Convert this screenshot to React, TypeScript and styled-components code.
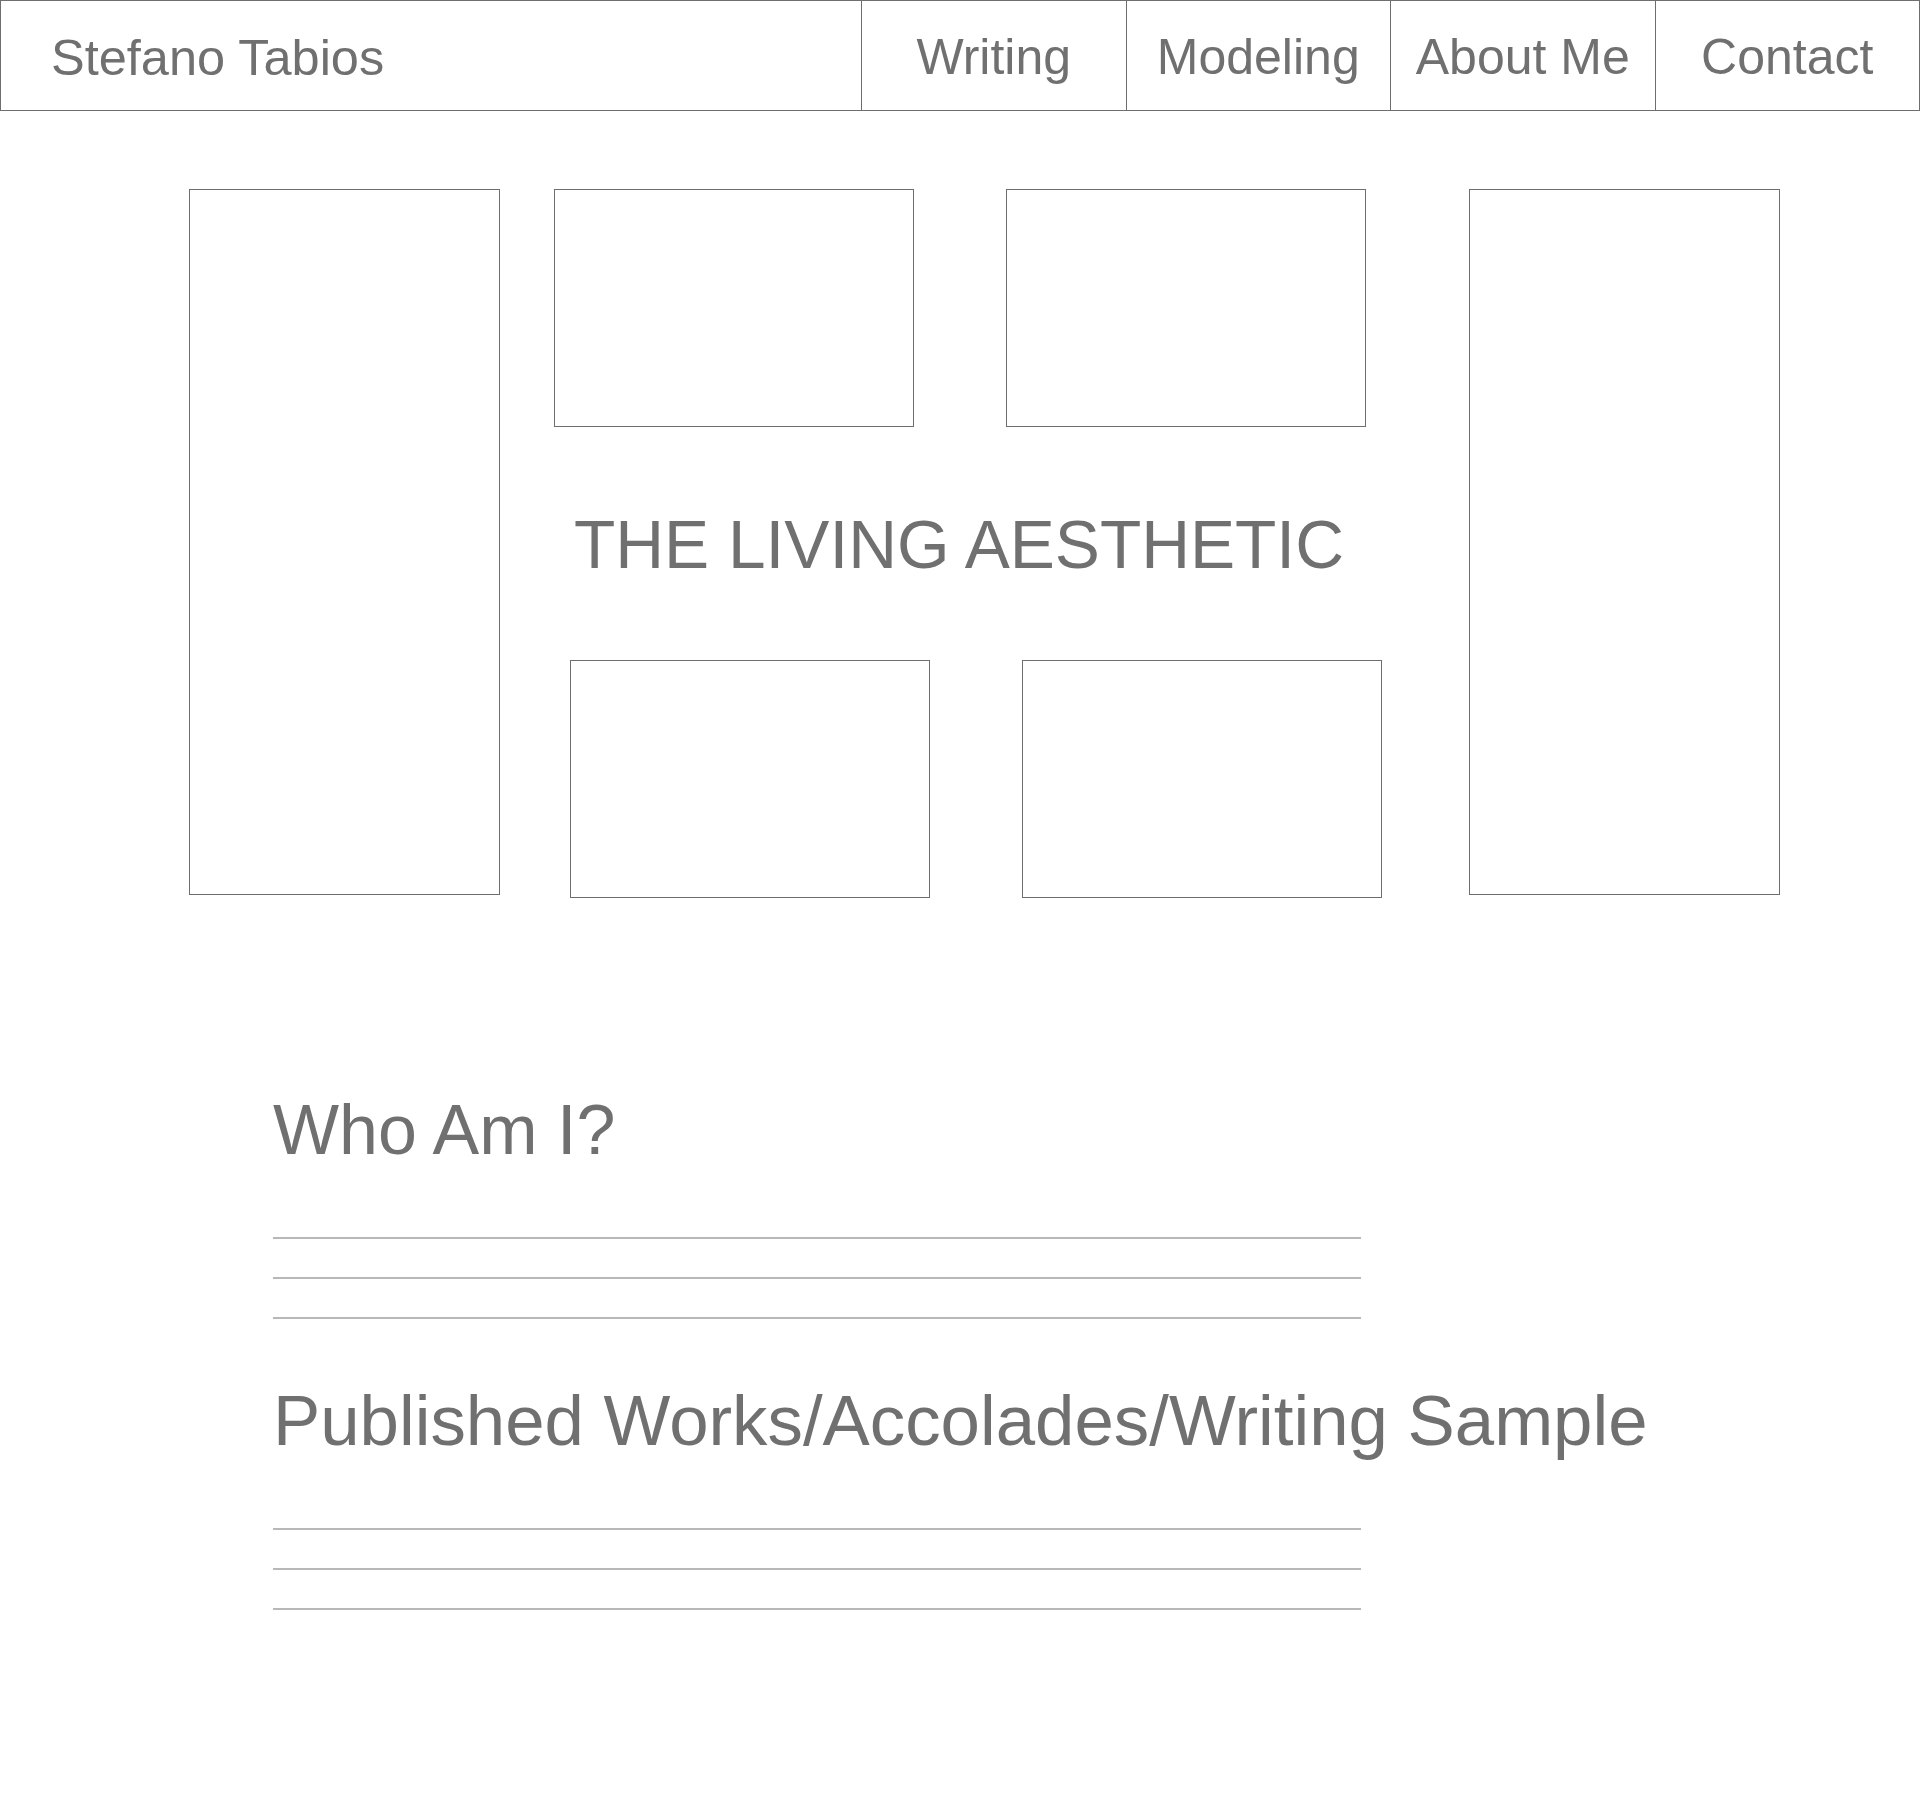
import { createGlobalStyle } from 'styled-components';
import styled from 'styled-components';

const GlobalStyle = createGlobalStyle`
  html, body {
    margin: 0;
    padding: 0;
    background: #ffffff;
  }

  body {
    font-family: "Liberation Sans", Arial, Helvetica, sans-serif;
    color: #707070;
  }

  * {
    box-sizing: border-box;
  }
`;

const Page = styled.div`
  width: 1920px;
  min-height: 1795px;
  background: #ffffff;
`;

const Header = styled.header`
  display: flex;
  height: 111px;
  border: 1px solid #6e6e6e;
`;

const Brand = styled.div`
  flex: 1;
  display: flex;
  align-items: center;
  padding: 5px 0 0 50px;
  font-size: 50.5px;
  line-height: 1;
  color: #707070;
  white-space: nowrap;
`;

const NavItem = styled.a`
  width: 264.5px;
  flex: none;
  display: flex;
  align-items: center;
  justify-content: center;
  padding-top: 2px;
  border-left: 1px solid #6e6e6e;
  font-size: 50px;
  line-height: 1;
  color: #707070;
  text-decoration: none;
  white-space: nowrap;
`;

const Hero = styled.section`
  display: flex;
  align-items: flex-start;
  padding: 78px 0 0 189px;
`;

const TallFrame = styled.div<{ $gap: number }>`
  width: 311px;
  height: 706px;
  margin-left: ${({ $gap }) => $gap}px;
  border: 1px solid #6e6e6e;
  flex: none;
`;

const Middle = styled.div`
  width: 828px;
  margin-left: 54px;
  display: flex;
  flex-direction: column;
  flex: none;
`;

const FrameRow = styled.div<{ $offset: number }>`
  display: flex;
  gap: 92px;
  padding-left: ${({ $offset }) => $offset}px;
`;

const SmallFrame = styled.div`
  width: 360px;
  height: 238px;
  border: 1px solid #6e6e6e;
  flex: none;
`;

const Title = styled.h1`
  margin: 84px 0 82px 20px;
  font-size: 67.6px;
  line-height: 67px;
  font-weight: 400;
  color: #707070;
  white-space: nowrap;
`;

const Section = styled.section<{ $top: number }>`
  padding-left: 273px;
  margin-top: ${({ $top }) => $top}px;
`;

const Heading = styled.h2<{ $size: number }>`
  margin: 0;
  font-size: ${({ $size }) => $size}px;
  line-height: 70px;
  font-weight: 400;
  color: #707070;
  white-space: nowrap;
`;

const RuleList = styled.div`
  display: flex;
  flex-direction: column;
  gap: 38px;
  margin-top: 72px;
`;

const Rule = styled.div`
  width: 1088px;
  height: 2px;
  background: #b8b8b8;
`;

const navLinks = ['Writing', 'Modeling', 'About Me', 'Contact'];

const sections = [
  { title: 'Who Am I?', top: 197, size: 70 },
  { title: 'Published Works/Accolades/Writing Sample', top: 67, size: 70.8 }
];

export default function App() {
  return (
    <Page>
      <GlobalStyle />
      <Header>
        <Brand>Stefano Tabios</Brand>
        {navLinks.map((link) => (
          <NavItem key={link} href="#">{link}</NavItem>
        ))}
      </Header>

      <Hero>
        <TallFrame $gap={0} />
        <Middle>
          <FrameRow $offset={0}>
            <SmallFrame />
            <SmallFrame />
          </FrameRow>
          <Title>THE LIVING AESTHETIC</Title>
          <FrameRow $offset={16}>
            <SmallFrame />
            <SmallFrame />
          </FrameRow>
        </Middle>
        <TallFrame $gap={87} />
      </Hero>

      {sections.map((section) => (
        <Section key={section.title} $top={section.top}>
          <Heading $size={section.size}>{section.title}</Heading>
          <RuleList>
            <Rule />
            <Rule />
            <Rule />
          </RuleList>
        </Section>
      ))}
    </Page>
  );
}
